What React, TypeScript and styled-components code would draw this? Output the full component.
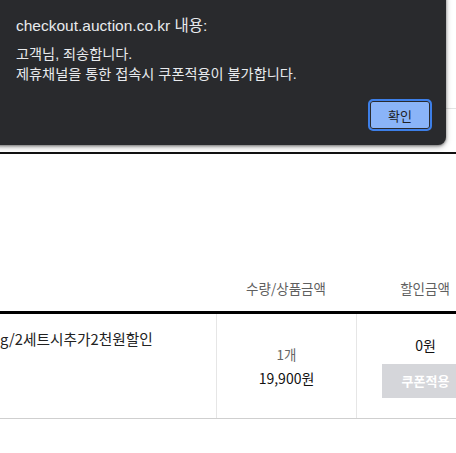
import React from "react";
import styled, { createGlobalStyle } from "styled-components";

const Global = createGlobalStyle`
  html, body { margin: 0; padding: 0; background: #fff; overflow: hidden; }
  body { font-family: "Noto Sans CJK KR", "Noto Sans", sans-serif; }
`;

const Page = styled.div`
  position: relative;
  width: 456px;
  height: 453px;
  overflow: hidden;
`;

const TopBar = styled.div`
  height: 108px;
  border-bottom: 1px solid #e3e3e3;
`;

const SubBar = styled.div`
  height: 43px;
  border-bottom: 2px solid #111;
`;

const Table = styled.div`
  width: 494px;
  padding-top: 124px;
`;

const Row = styled.div<{ $head?: boolean }>`
  display: grid;
  grid-template-columns: 216px 140px 138px;
  border-bottom: ${(p) => (p.$head ? "3px solid #000" : "1px solid #cfcfcf")};
`;

const HeadCell = styled.div`
  text-align: center;
  font-size: 13.5px;
  line-height: 20px;
  color: #5f5f5f;
  padding-bottom: 13px;
`;

const Cell = styled.div<{ $divided?: boolean }>`
  height: 104px;
  box-sizing: border-box;
  border-left: ${(p) => (p.$divided ? "1px solid #e6e6e6" : "none")};
  display: flex;
  flex-direction: column;
  align-items: center;
  justify-content: center;
`;

const NameCell = styled.div`
  height: 104px;
  box-sizing: border-box;
  padding-top: 15px;
`;

const ProductName = styled.div`
  font-size: 14.7px;
  line-height: 20px;
  color: #222;
  white-space: nowrap;
`;

const Qty = styled.div`
  font-size: 13.5px;
  line-height: 20px;
  color: #666;
`;

const Price = styled.div<{ $gap?: number }>`
  font-size: 14px;
  line-height: 20px;
  color: #111;
  margin-top: ${(p) => p.$gap ?? 0}px;
`;

const CouponButton = styled.button`
  margin-top: 9px;
  width: 88px;
  height: 34px;
  border: none;
  background: #d5d6da;
  color: #fff;
  font-family: inherit;
  font-size: 13px;
  font-weight: 700;
  padding: 0;
`;

const Dialog = styled.div`
  position: absolute;
  left: -10px;
  top: -10px;
  width: 456px;
  box-sizing: border-box;
  padding: 26px 14px 14px 26px;
  background: #292a2d;
  border-radius: 8px;
  box-shadow: 0 1px 3px rgba(0, 0, 0, 0.45), 0 2px 6px rgba(0, 0, 0, 0.25);
  display: flex;
  flex-direction: column;
`;

const DialogTitle = styled.div`
  font-family: "Liberation Sans", "Noto Sans CJK KR", sans-serif;
  font-size: 15.5px;
  line-height: 20px;
  color: #e8eaed;
`;

const DialogBody = styled.div`
  margin-top: 8px;
  font-family: "Liberation Sans", "Noto Sans CJK KR", sans-serif;
  font-size: 14.2px;
  line-height: 20px;
  color: #e8eaed;
`;

const Actions = styled.div`
  margin-top: 15px;
  display: flex;
  justify-content: flex-end;
`;

const OkButton = styled.button`
  width: 64px;
  height: 32px;
  box-sizing: border-box;
  border: 2px solid #3d7fe8;
  border-radius: 5px;
  box-shadow: inset 0 0 0 1px #292a2d;
  background: #8ab4f8;
  color: #202124;
  font-family: "Noto Sans CJK KR", sans-serif;
  font-size: 13px;
  padding: 0;
`;

export default function App() {
  return (
    <>
      <Global />
      <Page>
        <TopBar />
        <SubBar />
        <Table>
          <Row $head>
            <HeadCell />
            <HeadCell>수량/상품금액</HeadCell>
            <HeadCell>할인금액</HeadCell>
          </Row>
          <Row>
            <NameCell>
              <ProductName>g/2세트시추가2천원할인</ProductName>
            </NameCell>
            <Cell $divided>
              <Qty>1개</Qty>
              <Price $gap={4}>19,900원</Price>
            </Cell>
            <Cell $divided>
              <Price>0원</Price>
              <CouponButton>쿠폰적용</CouponButton>
            </Cell>
          </Row>
        </Table>
        <Dialog>
          <DialogTitle>checkout.auction.co.kr 내용:</DialogTitle>
          <DialogBody>
            고객님, 죄송합니다.
            <br />
            제휴채널을 통한 접속시 쿠폰적용이 불가합니다.
          </DialogBody>
          <Actions>
            <OkButton>확인</OkButton>
          </Actions>
        </Dialog>
      </Page>
    </>
  );
}
